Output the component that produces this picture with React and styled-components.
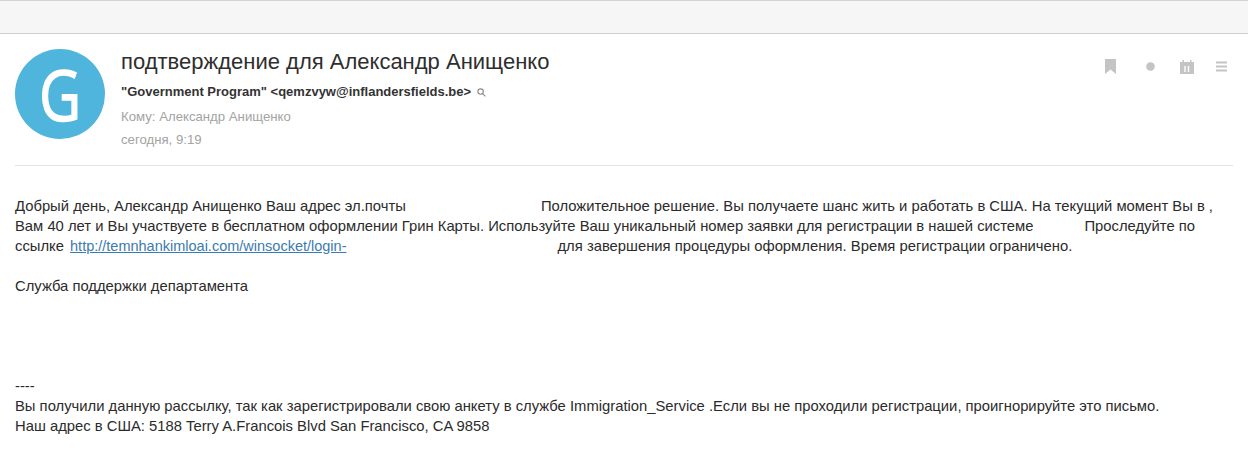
import React from 'react';
import styled, { createGlobalStyle } from 'styled-components';

const GlobalStyle = createGlobalStyle`
  html, body {
    margin: 0;
    padding: 0;
    background: #ffffff;
    font-family: "Liberation Sans", Arial, sans-serif;
  }
`;

const Page = styled.div`
  width: 1248px;
  height: 468px;
  overflow: hidden;
  background: #ffffff;
`;

const Toolbar = styled.div`
  box-sizing: border-box;
  height: 34px;
  background: #f6f6f6;
  border-top: 1px solid #d4d4d4;
  border-bottom: 1px solid #cfcfcf;
`;

const Content = styled.div`
  padding: 15px 15px 0;
`;

const Header = styled.div`
  box-sizing: border-box;
  height: 117px;
  display: flex;
  border-bottom: 1px solid #e4e4e4;
`;

const Avatar = styled.div`
  flex: none;
  width: 90px;
  height: 90px;
  border-radius: 50%;
  background: #4fb5dc;
  color: #ffffff;
  font-family: "Open Sans", sans-serif;
  font-size: 69px;
  line-height: 90px;
  text-align: center;
`;

const AvatarLetter = styled.span`
  display: inline-block;
  transform: scaleX(0.84);
  -webkit-text-stroke: 1.4px #ffffff;
`;

const Meta = styled.div`
  flex: 1;
  margin-left: 16px;
`;

const Subject = styled.div`
  font-size: 22px;
  line-height: 26px;
  color: #2e2e2e;
`;

const Sender = styled.div`
  display: flex;
  align-items: center;
  gap: 6px;
  margin-top: 5px;
  font-size: 13px;
  line-height: 24px;
  font-weight: bold;
  color: #333333;
`;

const Muted = styled.div`
  margin-top: ${(p) => p.$top || 0}px;
  font-size: 13.2px;
  line-height: 23px;
  color: #a3a3a3;
`;

const Actions = styled.div`
  flex: none;
  display: flex;
  align-items: center;
  align-self: flex-start;
  height: 15px;
  margin-top: 10px;
  margin-right: 6px;
`;

const ActionIcon = styled.svg`
  display: block;
  margin-left: ${(p) => p.$left}px;
  fill: #c4c4c4;
`;

const Body = styled.div`
  padding-top: 30px;
  font-size: 14.8px;
  line-height: 20px;
  color: #2b2b2b;
`;

const Line = styled.div`
  height: 20px;
  white-space: nowrap;
`;

const Gap = styled.span`
  display: inline-block;
  width: ${(p) => p.$w}px;
`;

const Spacer = styled.div`
  height: ${(p) => p.$h}px;
`;

const MailLink = styled.a`
  color: #3a7bb0;
  font-size: 14.5px;
  text-decoration: underline;
`;

const App = () => (
  <Page>
    <GlobalStyle />
    <Toolbar />
    <Content>
      <Header>
        <Avatar><AvatarLetter>G</AvatarLetter></Avatar>
        <Meta>
          <Subject>подтверждение для Александр Анищенко</Subject>
          <Sender>
            <span>"Government Program" &lt;qemzvyw@inflandersfields.be&gt;</span>
            <svg width="9" height="9" viewBox="0 0 9 9" fill="none" stroke="#8a8a8a" strokeWidth="1.1">
              <circle cx="3.6" cy="3.6" r="2.7" />
              <path d="M5.6 5.6L8.4 8.4" />
            </svg>
          </Sender>
          <Muted $top={1}>Кому: Александр Анищенко</Muted>
          <Muted>сегодня, 9:19</Muted>
        </Meta>
        <Actions>
          <ActionIcon $left={0} width="11" height="15" viewBox="0 0 11 15">
            <path d="M0 0H11V15L5.5 10.5L0 15Z" />
          </ActionIcon>
          <ActionIcon $left={30} width="9" height="9" viewBox="0 0 9 9">
            <circle cx="4.5" cy="4.5" r="4.3" />
          </ActionIcon>
          <ActionIcon $left={25} width="14" height="14" viewBox="0 0 14 14">
            <path d="M0 2H2.5V0H4V2H10V0H11.5V2H14V14H0Z" />
            <path d="M5 6V12M8.5 6V12" stroke="#ffffff" strokeWidth="1.4" />
          </ActionIcon>
          <ActionIcon $left={22} width="11" height="11" viewBox="0 0 11 11">
            <path d="M0 0.5H11V2.5H0ZM0 4.5H11V6.5H0ZM0 8.5H11V10.5H0Z" />
          </ActionIcon>
        </Actions>
      </Header>
      <Body>
        <Line>
          Добрый день, Александр Анищенко Ваш адрес эл.почты
          <Gap $w={135} />
          Положительное решение. Вы получаете шанс жить и работать в США. На текущий момент Вы в ,
        </Line>
        <Line>
          Вам 40 лет и Вы участвуете в бесплатном оформлении Грин Карты. Используйте Ваш уникальный номер заявки для регистрации в нашей системе
          <Gap $w={51} />
          Проследуйте по
        </Line>
        <Line>
          ссылке <Gap $w={2} /><MailLink href="#">http://temnhankimloai.com/winsocket/login-</MailLink>
          <Gap $w={211} />
          для завершения процедуры оформления. Время регистрации ограничено.
        </Line>
        <Spacer $h={20} />
        <Line>Служба поддержки департамента</Line>
        <Spacer $h={80} />
        <Line>----</Line>
        <Line>
          Вы получили данную рассылку, так как зарегистрировали свою анкету в службе Immigration_Service .Если вы не проходили регистрации, проигнорируйте это письмо.
        </Line>
        <Line>Наш адрес в США: 5188 Terry A.Francois Blvd San Francisco, CA 9858</Line>
      </Body>
    </Content>
  </Page>
);

export default App;
